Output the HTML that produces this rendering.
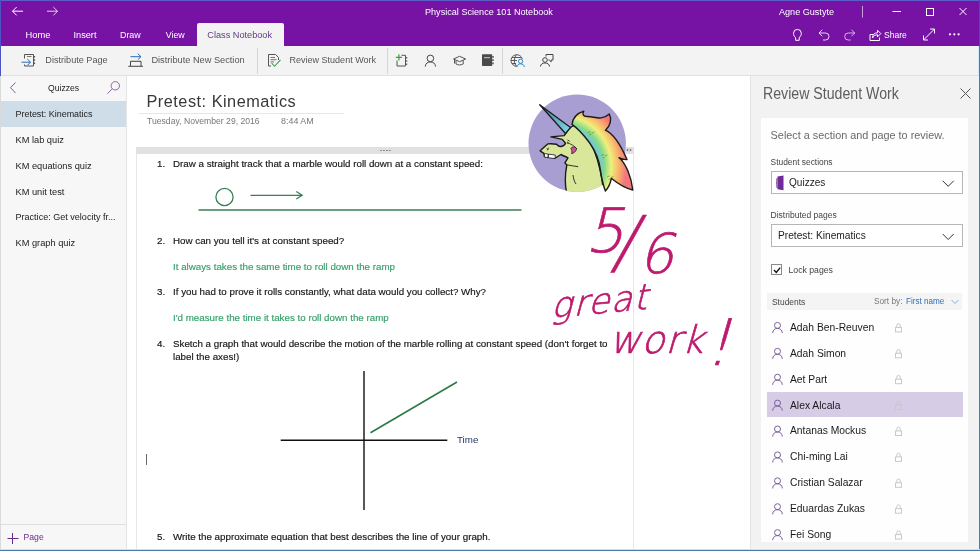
<!DOCTYPE html>
<html lang="en">
<head>
<meta charset="utf-8">
<title>Physical Science 101 Notebook</title>
<style>
*{box-sizing:border-box;margin:0;padding:0}
html,body{width:980px;height:551px;overflow:hidden;background:#fff}
body{font-family:"Liberation Sans","DejaVu Sans",sans-serif;color:#1a1a1a;position:relative}
.abs{position:absolute}
#win{position:absolute;left:0;top:0;width:980px;height:551px;overflow:hidden;background:#fff;will-change:transform}
/* title */
#hdr{position:absolute;left:0;top:0;width:980px;height:46px;background:#7612a4}
#hdr .t{position:absolute;color:#fff;font-size:9.1px;line-height:12px;white-space:nowrap}
#tab{position:absolute;left:197px;top:23px;width:87px;height:24px;background:#f3f3f3;border-radius:2px 2px 0 0;color:#5f3a80;font-size:9.18px;line-height:24px;padding-left:10.3px;white-space:nowrap}
#tb{position:absolute;left:0;top:46px;width:980px;height:30px;background:#f3f3f3;border-bottom:1px solid #e0e0e0}
#tb .t{position:absolute;top:0;line-height:29px;font-size:9.1px;color:#555;white-space:nowrap}
#tb .sep{position:absolute;top:2px;width:1px;height:26px;background:#d6d6d6}
/* sidebar */
#side{position:absolute;left:0;top:76px;width:127px;height:475px;background:#f7f7f7;border-right:1px solid #e4e4e4}
#side .it{position:absolute;left:0;width:126px;height:26px;line-height:26px;padding-left:15.5px;font-size:9.25px;color:#222;white-space:nowrap}
#side .sel{background:#cfdde9}
/* page */
#pg{position:absolute;left:127px;top:76px;width:623px;height:475px;background:#fff;overflow:hidden}
.q{position:absolute;font-size:9.78px;line-height:14.800px;color:#161616;white-space:nowrap;-webkit-text-stroke:.16px currentColor}
.g{color:#35a06a}
/* right pane */
#rp{position:absolute;left:750px;top:76px;width:230px;height:475px;background:#f2f2f2;border-left:1px solid #e4e4e4}
#card{position:absolute;left:10px;top:42px;width:207px;height:424px;overflow:hidden;background:#fefefe}
.st{position:absolute;left:6px;width:196px;height:26px;font-size:10.3px;line-height:26.200px;color:#1a1a1a;padding-left:23px;white-space:nowrap}
.dd{position:absolute;left:10px;width:192px;height:23px;border:1px solid #b6b6b6;background:#fff}
.dd span{position:absolute;top:0;line-height:22px;color:#1c1c1c;white-space:nowrap}
</style>
</head>
<body>
<div id="win">

<!-- header -->
<div id="hdr">
  <div class="t" style="left:425px;top:6px;font-size:9.1px">Physical Science 101 Notebook</div>
  <div class="t" style="left:779px;top:6px;font-size:9.08px">Agne Gustyte</div>
  <div class="t" style="left:25.5px;top:29.3px;font-size:9.33px">Home</div>
  <div class="t" style="left:73.5px;top:29.3px;font-size:9.2px">Insert</div>
  <div class="t" style="left:120px;top:29.3px;font-size:8.9px">Draw</div>
  <div class="t" style="left:165.7px;top:29.3px;font-size:8.84px">View</div>
  <div class="t" style="left:884px;top:29px;font-size:8.58px">Share</div>
  <div id="tab">Class Notebook</div>
</div>

<!-- toolbar -->
<div id="tb">
  <div class="t" style="left:45.3px;font-size:9.14px">Distribute Page</div>
  <div class="t" style="left:151.4px;font-size:9.23px">Distribute New Section</div>
  <div class="t" style="left:289.5px;font-size:9.03px">Review Student Work</div>
  <div class="sep" style="left:256.500px"></div>
  <div class="sep" style="left:387px"></div>
  <div class="sep" style="left:502px"></div>
</div>

<!-- sidebar -->
<div id="side">
  <div class="it" style="top:0;height:25px;line-height:24.600px;padding-left:48px;font-size:8.64px">Quizzes</div>
  <div class="it sel" style="top:24.500px;line-height:27px;font-size:8.95px">Pretest: Kinematics</div>
  <div class="it" style="top:51px">KM lab quiz</div>
  <div class="it" style="top:77px">KM equations quiz</div>
  <div class="it" style="top:103px">KM unit test</div>
  <div class="it" style="top:128px;font-size:9.05px">Practice: Get velocity fr...</div>
  <div class="it" style="top:154px">KM graph quiz</div>
  <div class="abs" style="left:0;top:448px;width:126px;height:1px;background:#dedede"></div>
  <div class="it" style="top:448px;padding-left:23.6px;font-size:8.6px;color:#6b2a8e">Page</div>
  <svg class="abs" style="left:6px;top:455px" width="14" height="14" viewBox="0 0 14 14"><path d="M1.500 7.500H12.500M6.500 2V13" stroke="#6b2a8e" stroke-width="1"/></svg>
</div>

<!-- page -->
<div id="pg">
  <div class="abs" style="left:19.500px;top:15.400px;font-size:16.3px;letter-spacing:.5px;line-height:20px;color:#383838;white-space:nowrap">Pretest: Kinematics</div>
  <div class="abs" style="left:12px;top:37px;width:205px;height:1px;background:#e6e6e6"></div>
  <div class="abs" style="left:20px;top:40px;font-size:8.63px;line-height:10px;color:#777;white-space:nowrap">Tuesday, November 29, 2016</div>
  <div class="abs" style="left:154px;top:40px;font-size:8.94px;line-height:10px;color:#777;white-space:nowrap">8:44 AM</div>

  <!-- note container -->
  <div class="abs" style="left:9px;top:71px;width:498px;height:410px;border-left:1px solid #e6e6e6;border-right:1px solid #e6e6e6"></div>
  <div class="abs" style="left:9px;top:71px;width:498px;height:6.700px;background:#e1e1e1"></div>
  <svg class="abs" style="left:253px;top:72px" width="12" height="5" viewBox="0 0 12 5"><path d="M.2 2.500h1.700M3.100 2.500h1.700M6 2.500h1.700M8.900 2.500h1.700" stroke="#808080" stroke-width="1.200"/></svg>

  <div class="q" style="left:30px;top:81px">1.</div>
  <div class="q" style="left:46px;top:81px">Draw a straight track that a marble would roll down at a constant speed:</div>
  <div class="q" style="left:30px;top:158px">2.</div>
  <div class="q" style="left:46px;top:158px">How can you tell it's at constant speed?</div>
  <div class="q g" style="left:46px;top:184px">It always takes the same time to roll down the ramp</div>
  <div class="q" style="left:30px;top:209px">3.</div>
  <div class="q" style="left:46px;top:209px">If you had to prove it rolls constantly, what data would you collect? Why?</div>
  <div class="q g" style="left:46px;top:235px">I'd measure the time it takes to roll down the ramp</div>
  <div class="q" style="left:30px;top:261px">4.</div>
  <div class="q" style="left:46px;top:261px">Sketch a graph that would describe the motion of the marble rolling at constant speed (don't forget to</div>
  <div class="q" style="left:46px;top:274.400px">label the axes!)</div>
  <div class="q" style="left:330px;top:357px;color:#1f3864;-webkit-text-stroke:0">Time</div>
  <div class="q" style="left:30px;top:453.600px">5.</div>
  <div class="q" style="left:46px;top:453.600px">Write the approximate equation that best describes the line of your graph.</div>
  <div class="abs" style="left:19px;top:378px;width:1px;height:11px;background:#6a6a6a"></div>

  <svg class="abs" style="left:0;top:0" width="622" height="475" viewBox="127 76 622 475" fill="none">
    <!-- Q1 drawing -->
    <circle cx="224.500" cy="197" r="8.600" stroke="#377f55" stroke-width="1.300"/>
    <path d="M250.500 195.300H302M296.300 191.600L302.200 195.300L296.300 199" stroke="#377f55" stroke-width="1.200"/>
    <path d="M198.500 210H521.500" stroke="#377f55" stroke-width="1.300"/>
    <!-- graph -->
    <path d="M364 371V510" stroke="#111" stroke-width="1.400"/>
    <path d="M280.700 440.200H447.300" stroke="#111" stroke-width="1.400"/>
    <path d="M370.500 432.700L457 382" stroke="#2c7a45" stroke-width="1.600"/>
  </svg>
</div>

<!-- right pane -->
<div id="rp">
  <div class="abs" style="left:12px;top:8.400px;font-size:15.6px;letter-spacing:0;line-height:20px;color:#5e5e5e;white-space:nowrap;transform:scaleX(.908);transform-origin:0 0">Review Student Work</div>
  <svg class="abs" style="left:208px;top:11px" width="13" height="13" viewBox="0 0 13 13"><path d="M1.5 1.5L11.5 11.5M11.5 1.5L1.5 11.5" stroke="#555" stroke-width="1"/></svg>
  <div id="card">
    <div class="abs" style="left:9.600px;top:9px;font-size:10.87px;line-height:16px;color:#6a6a6a;white-space:nowrap">Select a section and page to review.</div>
    <div class="abs" style="left:9.600px;top:37.700px;font-size:8.4px;line-height:12px;color:#444;white-space:nowrap">Student sections</div>
    <div class="dd" style="top:53px"><span style="left:17px;font-size:10.05px">Quizzes</span></div>
    <div class="abs" style="left:9.600px;top:90.700px;font-size:8.5px;line-height:12px;color:#444;white-space:nowrap">Distributed pages</div>
    <div class="dd" style="top:106px"><span style="left:6px;font-size:10.2px">Pretest: Kinematics</span></div>
    <div class="abs" style="left:10px;top:146px;width:11px;height:11px;border:1px solid #8a8a8a;background:#fff"></div>
    <div class="abs" style="left:27.500px;top:145.700px;font-size:8.7px;line-height:12px;color:#444;white-space:nowrap">Lock pages</div>
    <div class="abs" style="left:6px;top:174.500px;width:195px;height:17.500px;background:#f4f4f4"></div>
    <div class="abs" style="left:11px;top:177.700px;font-size:8.43px;line-height:12px;color:#444;white-space:nowrap">Students</div>
    <div class="abs" style="left:113px;top:178px;font-size:8.27px;line-height:12px;color:#777;white-space:nowrap">Sort by:</div>
    <div class="abs" style="left:145px;top:178px;font-size:8.15px;line-height:12px;color:#2f6fb5;white-space:nowrap">First name</div>
    <div class="st" style="top:196.8px">Adah Ben-Reuven</div>
    <div class="st" style="top:222.7px">Adah Simon</div>
    <div class="st" style="top:248.6px">Aet Part</div>
    <div class="abs" style="left:6px;top:274.3px;width:196px;height:25.200px;background:#d6cce6"></div>
    <div class="st" style="top:274.5px">Alex Alcala</div>
    <div class="st" style="top:300.4px">Antanas Mockus</div>
    <div class="st" style="top:326.3px">Chi-ming Lai</div>
    <div class="st" style="top:352.2px">Cristian Salazar</div>
    <div class="st" style="top:378.1px">Eduardas Zukas</div>
    <div class="st" style="top:404.0px">Fei Song</div>
  </div>
</div>

<!-- right pane icons -->
<svg id="rpi" class="abs" style="left:749px;top:76px" width="231" height="475" viewBox="749 76 231 475" fill="none">
  <path d="M777.500 176.500L783.500 175.500V190.300L777.500 189.300Z" fill="#6f2b98"/>
  <path d="M777.200 178C776.600 179 776.600 187 777.200 188" stroke="#6f2b98" stroke-width="1"/>
  <path d="M942.700 180.800L948.200 186.300L953.700 180.800" stroke="#333" stroke-width="1"/>
  <path d="M942.700 234L948.200 239.500L953.700 234" stroke="#333" stroke-width="1"/>
  <path d="M774 270L776.300 272.400L780.200 267.600" stroke="#111" stroke-width="1.400"/>
  <path d="M951.500 300L955 303.500L958.500 300" stroke="#7aa7d0" stroke-width=".9"/>
  <g stroke="#755a93" stroke-width=".95"><circle cx="777.500" cy="325.4" r="3"/><path d="M772.700 333.0C772.700 326.8 782.300 326.8 782.300 333.0"/></g>
  <g stroke="#c9c9c9" stroke-width="1"><rect x="895.500" y="327.4" width="6" height="4.500"/><path d="M896.800 327.4V325.3A1.700 1.700 0 0 1 900.200 325.3V327.4"/></g>
  <g stroke="#755a93" stroke-width=".95"><circle cx="777.500" cy="351.3" r="3"/><path d="M772.700 358.9C772.700 352.7 782.300 352.7 782.300 358.9"/></g>
  <g stroke="#c9c9c9" stroke-width="1"><rect x="895.500" y="353.3" width="6" height="4.500"/><path d="M896.800 353.3V351.2A1.700 1.700 0 0 1 900.200 351.2V353.3"/></g>
  <g stroke="#755a93" stroke-width=".95"><circle cx="777.500" cy="377.2" r="3"/><path d="M772.700 384.8C772.700 378.6 782.300 378.6 782.300 384.8"/></g>
  <g stroke="#c9c9c9" stroke-width="1"><rect x="895.500" y="379.2" width="6" height="4.500"/><path d="M896.800 379.2V377.1A1.700 1.700 0 0 1 900.200 377.1V379.2"/></g>
  <g stroke="#755a93" stroke-width=".95"><circle cx="777.500" cy="403.1" r="3"/><path d="M772.700 410.7C772.700 404.5 782.300 404.5 782.300 410.7"/></g>
  <g stroke="#c9c9c9" stroke-width="1"><rect x="895.500" y="405.1" width="6" height="4.500"/><path d="M896.800 405.1V403.0A1.700 1.700 0 0 1 900.200 403.0V405.1"/></g>
  <g stroke="#755a93" stroke-width=".95"><circle cx="777.500" cy="429.0" r="3"/><path d="M772.700 436.6C772.700 430.4 782.300 430.4 782.300 436.6"/></g>
  <g stroke="#c9c9c9" stroke-width="1"><rect x="895.500" y="431.0" width="6" height="4.500"/><path d="M896.800 431.0V428.9A1.700 1.700 0 0 1 900.200 428.9V431.0"/></g>
  <g stroke="#755a93" stroke-width=".95"><circle cx="777.500" cy="454.9" r="3"/><path d="M772.700 462.5C772.700 456.3 782.300 456.3 782.300 462.5"/></g>
  <g stroke="#c9c9c9" stroke-width="1"><rect x="895.500" y="456.9" width="6" height="4.500"/><path d="M896.800 456.9V454.8A1.700 1.700 0 0 1 900.200 454.8V456.9"/></g>
  <g stroke="#755a93" stroke-width=".95"><circle cx="777.500" cy="480.8" r="3"/><path d="M772.700 488.4C772.700 482.2 782.300 482.2 782.300 488.4"/></g>
  <g stroke="#c9c9c9" stroke-width="1"><rect x="895.500" y="482.8" width="6" height="4.500"/><path d="M896.800 482.8V480.7A1.700 1.700 0 0 1 900.200 480.7V482.8"/></g>
  <g stroke="#755a93" stroke-width=".95"><circle cx="777.500" cy="506.7" r="3"/><path d="M772.700 514.3C772.700 508.1 782.300 508.1 782.300 514.3"/></g>
  <g stroke="#c9c9c9" stroke-width="1"><rect x="895.500" y="508.7" width="6" height="4.500"/><path d="M896.800 508.7V506.6A1.700 1.700 0 0 1 900.200 506.6V508.7"/></g>
  <g stroke="#755a93" stroke-width=".95"><circle cx="777.500" cy="532.6" r="3"/><path d="M772.700 540.2C772.700 534.0 782.300 534.0 782.300 540.2"/></g>
  <g stroke="#c9c9c9" stroke-width="1"><rect x="895.500" y="534.6" width="6" height="4.500"/><path d="M896.800 534.6V532.5A1.700 1.700 0 0 1 900.200 532.5V534.6"/></g>
</svg>

<!-- unicorn + ink overlay -->
<svg id="art" class="abs" style="left:500px;top:80px" width="249" height="300" viewBox="500 80 249 300" fill="none">
  <defs>
    <radialGradient id="mane" gradientUnits="userSpaceOnUse" cx="561" cy="166" r="68">
      <stop offset=".55" stop-color="#6fc7d8"/>
      <stop offset=".64" stop-color="#86d98c"/>
      <stop offset=".74" stop-color="#eef07c"/>
      <stop offset=".85" stop-color="#f9b56a"/>
      <stop offset=".96" stop-color="#f2777c"/>
    </radialGradient>
    <linearGradient id="horn" gradientUnits="userSpaceOnUse" x1="540" y1="105" x2="569" y2="130">
      <stop offset="0" stop-color="#3a7f9a"/>
      <stop offset="1" stop-color="#7fd3e6"/>
    </linearGradient>
    <clipPath id="cc"><circle cx="577.2" cy="143.3" r="48.700"/></clipPath>
  </defs>
  <circle cx="577.2" cy="143.3" r="48.700" fill="#a89ed1"/>
  <!-- body -->
  <path clip-path="url(#cc)" d="M567 131.500C570 127 574 125 577 126C590 136 600 156 604 195L567 195C565 186 565 174 566.800 165L564.900 162.900L568 157.800C566 157 563 155.500 561 154.500L555.300 158L544.500 156.500L543.900 153.400L540.100 150.800L547.700 143.900C551 143.600 554 143.800 556.600 144.200C558 146 559.500 146.800 561 146.500C563 146 565 144.800 565.500 143.200L562.300 139.400L550.900 136.900L564.200 135.600Z" fill="#d9e79b" stroke="#1b1b1b" stroke-width="1.400" stroke-linejoin="round"/>
  <!-- horn -->
  <path d="M539.700 104.700L570.500 127.500L565.500 133.500Z" fill="url(#horn)" stroke="#1b1b1b" stroke-width="1.300" stroke-linejoin="round"/>
  <!-- teeth -->
  <path d="M544.500 153.500L548.400 154.200L548.100 157.700L544.400 157ZM548.400 154.200L555.300 155L555 158.600L548.100 157.700Z" fill="#fff" stroke="#1b1b1b" stroke-width=".8"/>
  <!-- mouth -->
  <path d="M570.800 148.300C572.500 146.300 575.500 146.600 576.600 148.600C576 151.500 574 153.300 571.600 153.600C572.300 151.800 572 149.800 570.800 148.300Z" fill="#d84fa0" stroke="#1b1b1b" stroke-width=".8"/>
  <!-- eye/nostril -->
  <path d="M567.500 140L569.800 141.300M567 142L568.600 142.800M546.800 148.300L548.300 149.800M548.600 147.600L547.300 150.300M566.800 143C570 143.200 574 145.500 577 149" stroke="#1b1b1b" stroke-width=".8"/>
  <path d="M566.800 164.800C570.500 165.500 574.500 166.200 578.200 166.700M573 175C573.500 179 574.500 182 576 184" stroke="#1b1b1b" stroke-width=".9"/>
  <!-- mane -->
  <path d="M572 124.400C573 117 578 113 583.800 111.200C582 114 583 116.500 587 116.500C594 116 601 121.500 609.300 114C612 119 610.500 126 605.400 130.200C614 134 622 148 627 159.600C623.500 159.800 621 159 619 157.700C626 163 631.500 178 632.800 190C626 188.500 617 183 611.300 178.300C610.500 183 608 188 605.400 191C603.500 186 601.500 178 600.500 170.400C599 159 594 149 589.700 143C586 138 580 130 572 124.400Z" fill="url(#mane)" stroke="#1b1b1b" stroke-width="1.400" stroke-linejoin="round"/>

  <path d="M587.500 132.800L590.500 131.600M591.500 133.200L594.500 132M589 135L591 134.300M601 155.500L604 154.300M605 156L607.500 155M602.500 158L604.500 157.300M607 177L610 175.800M611 177.500L613.500 176.500M608.500 179.500L610.500 178.800" stroke="#4d7d3a" stroke-width=".7" opacity=".8"/>
  <path d="M626.200 150L628.200 148.500V151.500ZM631.800 150L629.800 148.500V151.500Z" fill="#777"/>
  <!-- handwritten ink (real text) -->
  <g fill="#bd1a6e" stroke="#bd1a6e" stroke-width=".7" font-family="'DejaVu Sans Light','DejaVu Sans',sans-serif" font-weight="200">
    <text transform="skewX(-14)" font-size="61"><tspan x="647.8" y="252">5</tspan><tspan x="677.7" y="266.4" font-size="70">/</tspan><tspan x="706.5" y="272.7" font-size="55">6</tspan></text>
    <text transform="translate(551 318) rotate(-5.400) skewX(-20)" font-size="35" letter-spacing="1.300">great</text>
    <text transform="skewX(-16)" font-size="38" letter-spacing=".8"><tspan x="710.4" y="353.5">work</tspan><tspan x="808.7" y="365" font-size="64">!</tspan></text>
  </g>
</svg>

<!-- icons overlay -->
<svg id="ico" class="abs" style="left:0;top:0" width="980" height="100" viewBox="0 0 980 100" fill="none" stroke-linecap="butt">
  <!-- title bar -->
  <g stroke="#fff" stroke-width="1">
    <path d="M12.5 11.2H23M16.7 7L12.5 11.2L16.7 15.4"/>
    <path d="M47 11.2H57.5M53.3 7L57.5 11.2L53.3 15.4" opacity=".8"/>
    <path d="M862.500 6V17.500" opacity=".6"/>
    <path d="M892.5 11.5H901"/>
    <rect x="926.500" y="8.500" width="7" height="7"/>
    <path d="M959.5 8L966.5 15M966.5 8L959.5 15"/>
  </g>
  <!-- header row 2 icons -->
  <g stroke="#fff" stroke-width="1">
    <path d="M795.600 40.300V37.600C794.300 36.600 793.500 35.100 793.500 33.300A3.900 3.900 0 0 1 801.300 33.300C801.300 35.100 800.500 36.600 799.200 37.600V40.300Z"/>
    <path d="M819 33H825.500A3.500 3.500 0 0 1 825.500 40H823M822.300 29.700L819 33L822.300 36.300" opacity=".82"/>
    <path d="M854.700 33H848.200A3.500 3.500 0 0 0 848.200 40H850.700M851.400 29.700L854.700 33L851.400 36.300" opacity=".68"/>
    <path d="M873.500 34.500H870V40.500H879.500V37.500M872.500 38C872.500 34.500 874.500 32.800 877.500 32.800V30.300L880.800 33.600L877.500 36.900V34.800C875.500 34.800 873.800 35.500 872.500 38Z"/>
    <path d="M923.500 40L934.500 29M923.500 35.500V40H928M930 29H934.500V33.500"/>
  </g>
  <g fill="#fff"><circle cx="950" cy="34.300" r="1.100"/><circle cx="954.300" cy="34.300" r="1.100"/><circle cx="958.600" cy="34.300" r="1.100"/></g>

  <!-- toolbar: distribute page -->
  <g stroke="#555" stroke-width="1">
    <path d="M24.500 58.500V54.500H33.500V66H24.500V64.500"/>
    <path d="M27 56.500H31.500" stroke-width=".8"/>
    <path d="M34.500 56V57.500M34.500 59.300V60.800M34.500 62.600V64.100" stroke-width="1.200"/>
  </g>
  <path d="M21.500 62.200H30.500M27.300 59L30.500 62.200L27.300 65.400" stroke="#2b6cb0" stroke-width="1"/>
  <!-- distribute new section -->
  <path d="M128.300 66.300H143M130.500 66V61.300H141V66" stroke="#444" stroke-width="1"/>
  <path d="M130.500 56.700H141M137.800 53.700L141 56.700L137.800 59.700" stroke="#2b6cb0" stroke-width="1"/>
  <!-- review student work -->
  <g stroke="#555" stroke-width="1">
    <path d="M271 66H268.500V54.500H275.500L278.500 57.500V60"/>
    <path d="M270.500 57.500H275M270.500 59.700H276.500M270.500 61.900H274" stroke-width=".8"/>
  </g>
  <path d="M271.600 63L274.500 66.300L280.500 59.800" stroke="#3a9a55" stroke-width="1.100"/>
  <!-- add notebook -->
  <g stroke="#555" stroke-width="1">
    <path d="M401.500 55.300H405.500V66H397V60.500"/>
    <path d="M406.700 57V58.500M406.700 60.200V61.700M406.700 63.400V64.900" stroke-width="1.100"/>
  </g>
  <path d="M395.800 57.400H402M398.900 54.300V60.500" stroke="#3f9b3f" stroke-width="1.200"/>
  <!-- person -->
  <g stroke="#444" stroke-width="1">
    <circle cx="430.400" cy="58.400" r="3.300"/>
    <path d="M425.300 66.500C425.300 60.400 435.500 60.400 435.500 66.500"/>
  </g>
  <!-- grad cap -->
  <g stroke="#555" stroke-width="1">
    <path d="M453.500 59L459.600 56.300L465.700 59L459.600 61.700Z"/>
    <path d="M456 60.300V64C457.500 65.200 461.700 65.200 463.200 64V60.300M454.500 59.500V63.500"/>
  </g>
  <!-- dark notebook -->
  <rect x="482" y="54.300" width="10.200" height="11.700" rx=".8" fill="#4a4a4a"/>
  <path d="M484 57.700H490" stroke="#ddd" stroke-width=".9"/>
  <path d="M493 56V57.700M493 59.300V61M493 62.600V64.300" stroke="#4a4a4a" stroke-width="1.400"/>
  <!-- globe person -->
  <g stroke="#4a4a4a" stroke-width=".9">
    <path d="M517 66.300A5.800 5.800 0 1 1 522.400 59"/>
    <path d="M516.600 54.800C513.600 57.500 513.600 63.500 516.600 66.200M511 60.500H517M512 57.500H521M512 63.500H516"/>
  </g>
  <g stroke="#2e86c1" stroke-width="1">
    <circle cx="520.600" cy="61.300" r="2.100"/>
    <path d="M517 67C517 62.800 524.300 62.800 524.300 67"/>
  </g>
  <!-- chat person -->
  <g stroke="#444" stroke-width="1">
    <circle cx="545" cy="60" r="2.300"/>
    <path d="M540.500 66.500C540.500 61.800 549.500 61.800 549.500 66.500"/>
    <path d="M546 56.500V54.500H553V60H551.200V61.800L549.300 60H548.500"/>
  </g>
  <!-- sidebar header icons -->
  <path d="M15.500 82.500L10.500 87.700L15.500 93" stroke="#8a52a8" stroke-width="1"/>
  <g stroke="#84589c" stroke-width=".9">
    <circle cx="115.300" cy="85.800" r="4.200"/>
    <path d="M112.300 88.800L107.300 93.800"/>
  </g>
</svg>

<!-- window frame -->
<div class="abs" style="left:0;top:0;width:980px;height:1px;background:#5d5cc9"></div>
<div class="abs" style="left:0;top:0;width:1px;height:76px;background:#4d52c4"></div>
<div class="abs" style="left:0;top:76px;width:1px;height:475px;background:#dadada"></div>
<div class="abs" style="left:978px;top:46px;width:1px;height:30px;background:#d6e9f8"></div>
<div class="abs" style="left:979px;top:46px;width:1px;height:505px;background:#4f7aa8"></div>
<div class="abs" style="left:979px;top:0;width:1px;height:46px;background:#5a3fc0"></div>
<div class="abs" style="left:0;top:549px;width:980px;height:1px;background:#c9e2f3"></div>
<div class="abs" style="left:0;top:550px;width:980px;height:1px;background:#4a7ba8"></div>

</div>
</body>
</html>
